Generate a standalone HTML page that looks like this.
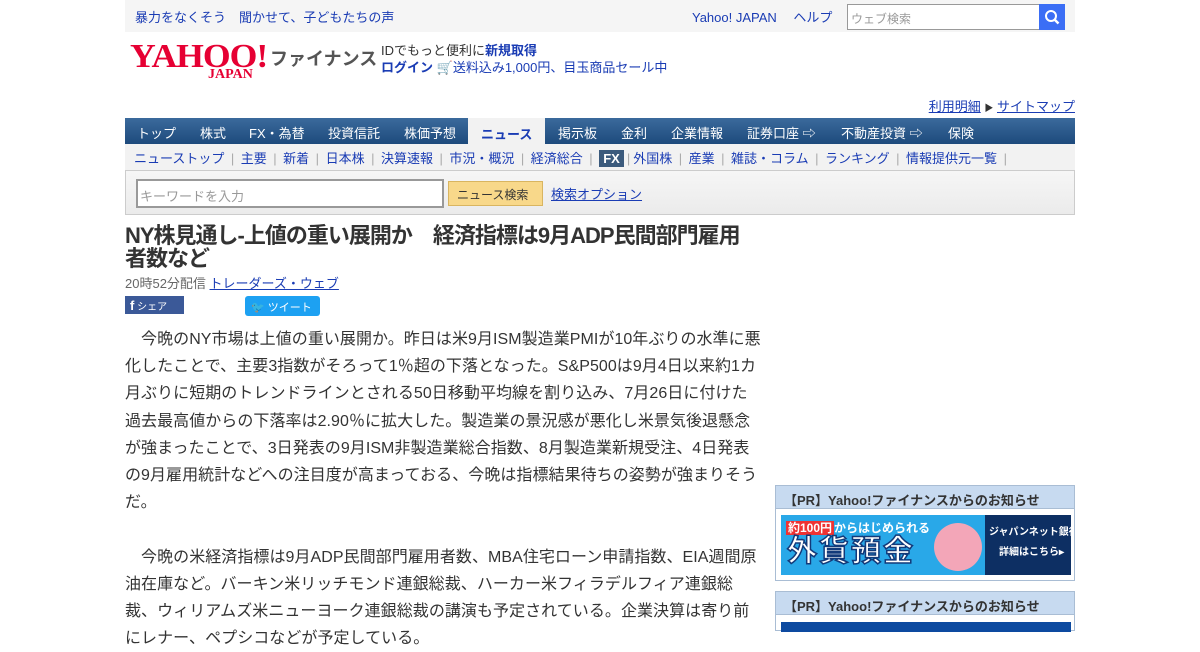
<!DOCTYPE html>
<html><head><meta charset="utf-8"><style>
*{margin:0;padding:0;box-sizing:border-box}
body{width:1200px;height:630px;overflow:hidden;background:#fff;font-family:"Liberation Sans","Noto Sans CJK JP",sans-serif;color:#333;font-size:13px}
a{color:#1a3cb4;text-decoration:none}
.wrap{position:absolute;left:125px;width:950px}
.top{top:0;height:32px;background:#f5f5f5}
.top .l{position:absolute;left:10px;top:7px;font-size:13px}
.top .r{position:absolute;left:567px;top:7px;font-size:13px}
.sbox{position:absolute;left:722px;top:4px;width:193px;height:26px;border:1px solid #999;background:#fff;color:#999;font-size:12px;padding:5px 3px}
.sbtn{position:absolute;left:914px;top:4px;width:26px;height:26px;background:#3b6ef5}
.logo{position:absolute;left:130px;top:42px}
.nav{top:118px;height:26px;background:linear-gradient(#3b6a9c,#1d4a7c);color:#fff;font-size:13px}
.nav span{position:absolute;top:5px}
.nav .act{top:0;height:26px;background:#f2f2f2;color:#1a3cb4;font-weight:bold;padding:6px 13px 0;left:343px}
.sub{top:144px;height:27px;background:#f2f2f2;font-size:13px;padding:4px 0 0 9px;color:#aaa;white-space:nowrap}
.sub a{color:#1a3cb4}
.sub i{font-style:normal;margin:0 6.5px}
.fx{background:#3b5a7c;color:#fff;font-weight:bold;padding:1px 4px}
.srch{top:170px;height:45px;border:1px solid #ccc;background:linear-gradient(#f6f6f6,#ebebeb)}
h1{position:absolute;left:125px;top:224px;width:630px;font-size:22px;line-height:23px;color:#333;letter-spacing:-1px}
.body{position:absolute;left:125px;top:326px;width:636px;font-size:16px;line-height:27.2px;color:#333;letter-spacing:0.05px}
.pr{position:absolute;left:775px;width:300px;border:1px solid #a9bdd4}
.prh{background:#c7daf0;border-bottom:1px solid #a9bdd4;height:23px;font-size:13px;font-weight:bold;padding:4px 8px;color:#333}
</style></head><body>
<div class="wrap top"><div class="l"><a>暴力をなくそう　聞かせて、子どもたちの声</a></div>
<div class="r"><a>Yahoo! JAPAN</a>　 <a>ヘルプ</a></div>
<div class="sbox">ウェブ検索</div><div class="sbtn"><svg width="26" height="26"><circle cx="12" cy="12" r="5" fill="none" stroke="#fff" stroke-width="2"/><path d="M15.5 15.5l4 4" stroke="#fff" stroke-width="2.5"/></svg></div></div>
<div class="logo"><span style="font-family:'Liberation Serif',serif;color:#e60033;font-size:34px;font-weight:bold;letter-spacing:-1px;line-height:30px;display:inline-block;transform:scaleX(1.05);transform-origin:left">YAHOO!</span><span style="position:absolute;left:78px;top:25px;font-family:'Liberation Serif',serif;color:#e60033;font-size:14px;font-weight:bold">JAPAN</span><span style="position:absolute;left:140px;top:3px;font-size:18px;font-weight:bold;color:#555;white-space:nowrap">ファイナンス</span></div>
<div style="position:absolute;left:381px;top:42px;font-size:13px;line-height:17px">IDでもっと便利に<a style="font-weight:bold">新規取得</a><br><a style="font-weight:bold">ログイン</a> <span style="color:#e87a00">🛒</span><a>送料込み1,000円、目玉商品セール中</a></div>
<div style="position:absolute;right:125px;top:96px;font-size:13px"><a style="text-decoration:underline">利用明細</a> <span style="font-size:9px;color:#333">▶</span> <a style="text-decoration:underline">サイトマップ</a></div>
<div class="wrap nav"><span style="left:12px">トップ</span><span style="left:75px">株式</span><span style="left:124px">FX・為替</span><span style="left:203px">投資信託</span><span style="left:279px">株価予想</span><span class="act">ニュース</span><span style="left:433px">掲示板</span><span style="left:496px">金利</span><span style="left:546px">企業情報</span><span style="left:622px">証券口座 ⇨</span><span style="left:716px">不動産投資 ⇨</span><span style="left:823px">保険</span></div>
<div class="wrap sub"><a>ニューストップ</a><i>|</i><a>主要</a><i>|</i><a>新着</a><i>|</i><a>日本株</a><i>|</i><a>決算速報</a><i>|</i><a>市況・概況</a><i>|</i><a>経済総合</a><i>|</i><span class="fx">FX</span><i style="margin:0 3px">|</i><a>外国株</a><i>|</i><a>産業</a><i>|</i><a>雑誌・コラム</a><i>|</i><a>ランキング</a><i>|</i><a>情報提供元一覧</a><i>|</i></div>
<div class="wrap srch"><div style="position:absolute;left:10px;top:8px;width:308px;height:29px;border:2px solid #999;background:#fff;color:#999;font-size:13px;padding:5px 2px">キーワードを入力</div><div style="position:absolute;left:322px;top:10px;width:95px;height:25px;background:#f8d88a;border:1px solid #d9b560;font-size:12px;padding:4px 8px;color:#333">ニュース検索</div><a style="position:absolute;left:425px;top:13px;text-decoration:underline">検索オプション</a></div>
<h1>NY株見通し-上値の重い展開か　経済指標は9月ADP民間部門雇用者数など</h1>
<div style="position:absolute;left:125px;top:273px;font-size:13px;color:#666">20時52分配信 <a style="text-decoration:underline">トレーダーズ・ウェブ</a></div>
<div style="position:absolute;left:125px;top:296px;width:59px;height:18px;background:#3b5998;color:#fff;font-size:10px;padding:2px 5px"><b style="font-size:13px">f</b> シェア</div>
<div style="position:absolute;left:245px;top:296px;width:75px;height:20px;background:#1da1f2;border-radius:3px;color:#fff;font-size:11px;padding:3px 6px">🐦 ツイート</div>
<div class="body">　今晩のNY市場は上値の重い展開か。昨日は米9月ISM製造業PMIが10年ぶりの水準に悪化したことで、主要3指数がそろって1％超の下落となった。S&amp;P500は9月4日以来約1カ月ぶりに短期のトレンドラインとされる50日移動平均線を割り込み、7月26日に付けた過去最高値からの下落率は2.90％に拡大した。製造業の景況感が悪化し米景気後退懸念が強まったことで、3日発表の9月ISM非製造業総合指数、8月製造業新規受注、4日発表の9月雇用統計などへの注目度が高まっておる、今晩は指標結果待ちの姿勢が強まりそうだ。<br><br>　今晩の米経済指標は9月ADP民間部門雇用者数、MBA住宅ローン申請指数、EIA週間原油在庫など。バーキン米リッチモンド連銀総裁、ハーカー米フィラデルフィア連銀総裁、ウィリアムズ米ニューヨーク連銀総裁の講演も予定されている。企業決算は寄り前にレナー、ペプシコなどが予定している。</div>
<div class="pr" style="top:485px;height:96px"><div class="prh">【PR】Yahoo!ファイナンスからのお知らせ</div>
<div style="position:absolute;left:5px;top:29px;width:290px;height:60px;background:#29a8e8;overflow:hidden"><div style="position:absolute;left:5px;top:4px;font-size:12px;font-weight:bold;color:#fff"><span style="background:#e33;padding:0 2px">約100円</span>からはじめられる</div><div style="position:absolute;left:6px;top:20px;font-size:30px;font-weight:bold;color:#fff;-webkit-text-stroke:1.5px #123a7a;letter-spacing:2px;line-height:34px">外貨預金</div><div style="position:absolute;left:153px;top:8px;width:48px;height:48px;border-radius:24px;background:#f3a6b8"></div><div style="position:absolute;left:204px;top:0;width:86px;height:60px;background:#0d2f63;color:#fff;font-size:10px;font-weight:bold;padding:8px 4px;line-height:20px;white-space:nowrap">ジャパンネット銀行<br>　詳細はこちら▸</div></div></div>
<div class="pr" style="top:591px;height:40px"><div class="prh">【PR】Yahoo!ファイナンスからのお知らせ</div><div style="position:absolute;left:5px;top:30px;width:290px;height:10px;background:#0d4aa0"></div></div>
</body></html>
